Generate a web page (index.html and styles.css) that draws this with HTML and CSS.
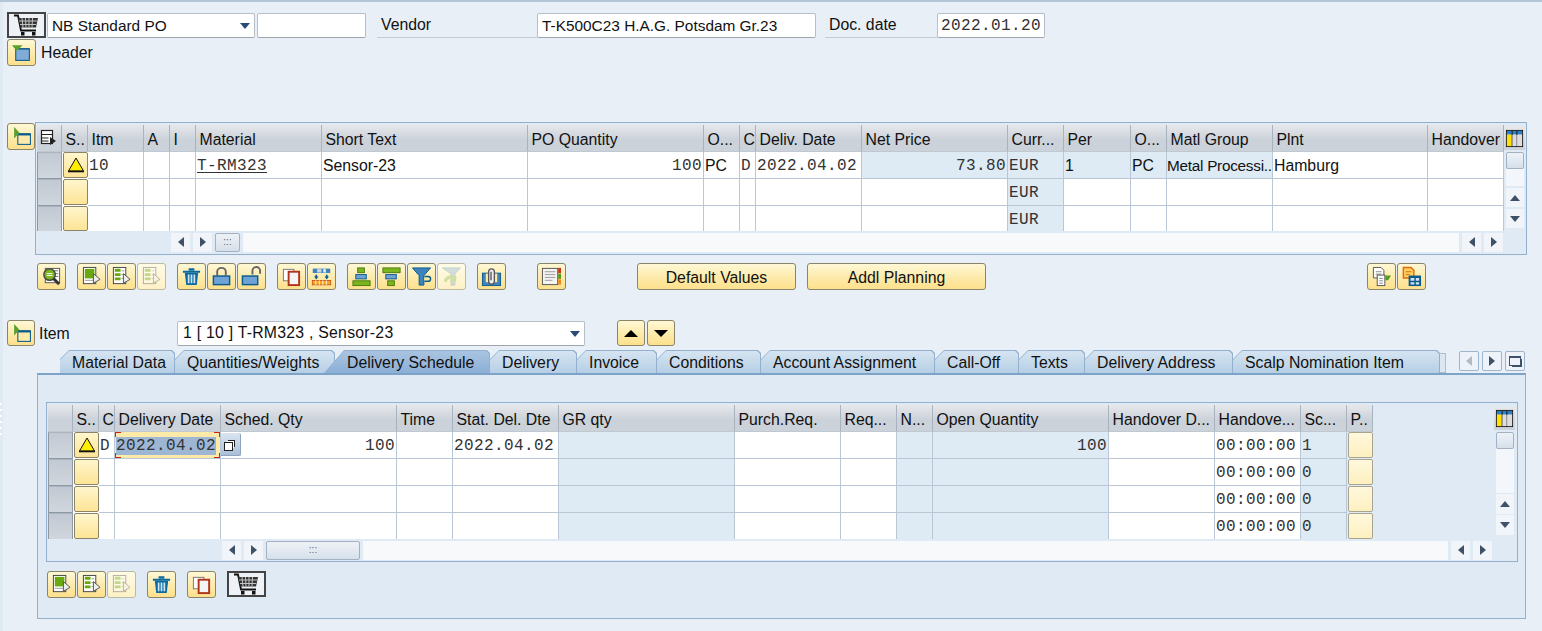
FILE: index.html
```html
<!DOCTYPE html>
<html>
<head>
    <meta charset="UTF-8">
    <title>Create Purchase Order</title>
    <link rel="stylesheet" href="styles.css">
</head>
<body>
<svg class="defs" width="0" height="0">
    <symbol id="cart" viewBox="0 0 30 22">
        <path d="M2 1.500h4l3 15h15" fill="none" stroke="#111" stroke-width="1.800"/>
        <path d="M6 4h20l-2 9.500H8.500z" fill="#333"/>
        <path d="M10 4l1 9.500M13.500 4l.5 9.500M17 4v9.500M20.500 4l-.5 9.500M7 7h18M8 10.500h16" stroke="#c4c4c4" stroke-width="1"/>
        <rect x="9" y="18" width="3.500" height="3.500" fill="#111"/><rect x="20" y="18" width="3.500" height="3.500" fill="#111"/>
    </symbol>
    <symbol id="sec-open" viewBox="0 0 20 20">
        <rect x="4.500" y="6.500" width="13" height="11" fill="#7fabd6" stroke="#0a5a8c"/>
        <path d="M4.500 6.500h13" stroke="#0a5a8c"/>
        <path d="M1 3h10L6 8H5z" fill="#5aa02c"/>
    </symbol>
    <symbol id="sec-closed" viewBox="0 0 20 20">
        <rect x="6.500" y="7.500" width="12" height="10" fill="#fdeaa8" stroke="#0a5a8c"/>
        <rect x="6.500" y="7" width="12" height="2" fill="#0a5a8c"/>
        <path d="M3 1v11l5-5.500z" fill="#5aa02c"/>
    </symbol>
    <symbol id="sel-cfg" viewBox="0 0 18 18">
        <rect x="1.500" y="1.500" width="11" height="13" fill="#fff" stroke="#222" stroke-width="1.200"/>
        <path d="M1.500 5.500h11M1.500 9h7M1.500 12h7" stroke="#222"/>
        <path d="M10 8v8l6-4z" fill="#222"/>
    </symbol>
    <symbol id="warn" viewBox="0 0 20 20">
        <path d="M10 3L2.500 16h15z" fill="#ffee00" stroke="#111" stroke-width="1"/>
        <path d="M2 16.500h16" stroke="#111" stroke-width="1.600"/>
    </symbol>
    <symbol id="config" viewBox="0 0 20 20">
        <rect x="1.500" y="1.500" width="17" height="17" fill="#fff" stroke="#111"/>
        <rect x="2" y="2" width="16" height="4" fill="#2f7fc4"/>
        <rect x="2" y="6" width="5" height="12" fill="#ffe000"/>
        <path d="M7.500 2v16M12.500 2v16" stroke="#111"/>
        <rect x="8" y="6" width="4" height="12" fill="#ddd"/><rect x="13" y="6" width="5" height="12" fill="#ddd"/>
    </symbol>
    <symbol id="details" viewBox="0 0 22 22">
        <rect x="4.500" y="2.500" width="15" height="15" fill="#fff" stroke="#555"/>
        <path d="M13 5h5M13 8h5M13 11h5" stroke="#777"/>
        <circle cx="9" cy="9" r="6" fill="#7ab51d" stroke="#444" stroke-width="1.500"/>
        <path d="M6 8h6M6 10h6" stroke="#fff"/>
        <path d="M13 13l6 6" stroke="#333" stroke-width="3"/>
    </symbol>
    <symbol id="sel-all" viewBox="0 0 22 22">
        <rect x="2.500" y="1.500" width="13" height="17" fill="#fff" stroke="#444"/>
        <rect x="4" y="3" width="10" height="10" fill="#6aa80f"/>
        <path d="M4 15h10" stroke="#999"/>
        <path d="M13 8v10l7-4z" fill="#eee" stroke="#555"/>
    </symbol>
    <symbol id="sel-block" viewBox="0 0 22 22">
        <rect x="2.500" y="1.500" width="13" height="17" fill="#fff" stroke="#444"/>
        <path d="M4 3h6v3H4zM4 7.500h6v3H4zM4 12h6v3H4z" fill="#6aa80f"/>
        <path d="M11 5h3M11 9h3M11 13h3" stroke="#999"/>
        <path d="M13 8v10l7-4z" fill="#eee" stroke="#555"/>
    </symbol>
    <symbol id="trash" viewBox="0 0 22 22">
        <path d="M8 3.500h6M2 6h18" stroke="#0a6aa0" stroke-width="2.200" fill="none"/>
        <path d="M4 7h14l-1.500 13h-11z" fill="#0a6aa0"/>
        <path d="M8 9v9M11 9v9M14 9v9" stroke="#cfe3f2" stroke-width="1.800"/>
    </symbol>
    <symbol id="lock" viewBox="0 0 22 22">
        <path d="M6.500 10V6a4.500 4 0 0 1 9 0v4" fill="none" stroke="#666" stroke-width="2"/>
        <rect x="2.500" y="10.500" width="17" height="9" fill="#6fa3d6" stroke="#0a5a8c" stroke-width="1.500"/>
    </symbol>
    <symbol id="unlock" viewBox="0 0 22 22">
        <path d="M12 9V5a4 4 0 0 1 8 0v3" fill="none" stroke="#666" stroke-width="2"/>
        <rect x="1.500" y="10.500" width="16" height="9" fill="#6fa3d6" stroke="#0a5a8c" stroke-width="1.500"/>
    </symbol>
    <symbol id="copy" viewBox="0 0 22 22">
        <rect x="2.500" y="3.500" width="11" height="12" fill="#fff" stroke="#777"/>
        <rect x="8" y="6" width="11" height="14" fill="#f4f4f4" stroke="#b0341c" stroke-width="2"/>
    </symbol>
    <symbol id="distrib" viewBox="0 0 24 22">
        <path d="M2 2h20v5H2z" fill="#3f83bd"/><path d="M7 2.500h5v4H7z" fill="#c9d6df"/><path d="M14 2.500h3v4h-3z" fill="#eee"/>
        <path d="M6 9v3M18 9v3" stroke="#0a5a8c" stroke-width="2"/><path d="M3.500 11h5L6 14.500zM15.500 11h5L18 14.500z" fill="#0a5a8c"/>
        <rect x="1.500" y="15.500" width="21" height="5" fill="#f6a81c" stroke="#c9541c"/>
        <path d="M5.500 15.500v5M9.500 15.500v5M13.500 15.500v5M17.500 15.500v5" stroke="#fff"/>
    </symbol>
    <symbol id="sort-up" viewBox="0 0 22 22">
        <rect x="7" y="2" width="7" height="5" fill="#7ab51d" stroke="#4c7c10"/>
        <rect x="5" y="9" width="11" height="4.500" fill="#6fa3d6" stroke="#0a5a8c"/>
        <rect x="2" y="15.500" width="18" height="5" fill="#7ab51d" stroke="#4c7c10"/>
    </symbol>
    <symbol id="sort-down" viewBox="0 0 22 22">
        <rect x="2" y="2" width="18" height="5" fill="#7ab51d" stroke="#4c7c10"/>
        <rect x="5" y="9" width="11" height="4.500" fill="#6fa3d6" stroke="#0a5a8c"/>
        <rect x="7" y="15.500" width="7" height="5" fill="#7ab51d" stroke="#4c7c10"/>
    </symbol>
    <symbol id="filter" viewBox="0 0 22 22">
        <path d="M1.500 2h19l-7 8v10h-5V10z" fill="#3f83bd" stroke="#0a5a8c"/>
        <path d="M14 11h4a2.500 2.500 0 0 1 0 5h-4" fill="#fdeaa8" stroke="#0a5a8c" stroke-width="1.500"/>
    </symbol>
    <symbol id="filter-off" viewBox="0 0 22 22">
        <path d="M1.500 2h19l-6 6v12h-4V8z" fill="#8fb8d6" stroke="#6f95ad"/>
        <path d="M3 16a7 7 0 0 1 11-5l2-1v6h-6l2-2a4 4 0 0 0-6 3z" fill="#8fbf5c"/>
    </symbol>
    <symbol id="clip" viewBox="0 0 22 22">
        <rect x="1.500" y="7.500" width="19" height="13" fill="#3f83bd" stroke="#0a5a8c"/>
        <rect x="5" y="8" width="12" height="9" fill="#fdeaa8"/>
        <path d="M8 6a3 3 0 0 1 6 0v10a3 3 0 0 1-6 0V6M10.500 6v9" fill="#eee" stroke="#555" stroke-width="1.400"/>
    </symbol>
    <symbol id="texts" viewBox="0 0 22 22">
        <rect x="1.500" y="2.500" width="16" height="17" fill="#f4f4f4" stroke="#555"/>
        <path d="M4 6h11M4 9h11M4 12h11M4 15h8" stroke="#999"/>
        <rect x="18" y="2" width="3" height="5.500" fill="#c9341c"/><rect x="18" y="8" width="3" height="5.500" fill="#5a9a1c"/><rect x="18" y="14" width="3" height="5.500" fill="#f08a1c"/>
    </symbol>
    <symbol id="doc-arrow" viewBox="0 0 22 22">
        <path d="M2.500 1.500h8l3 3v8h-11z" fill="#fff" stroke="#555"/>
        <path d="M5 6h6M5 8.500h6" stroke="#888"/>
        <rect x="6.500" y="9.500" width="8" height="11" fill="#fff" stroke="#555"/>
        <path d="M8.500 13h4M8.500 15.500h4M8.500 18h4" stroke="#888"/>
        <path d="M15 10h6l-3 5h-3z" fill="#5a9a1c"/>
    </symbol>
    <symbol id="doc-table" viewBox="0 0 22 22">
        <path d="M2.500 1.500h8l3 3v8h-11z" fill="#fdd05c" stroke="#e06a10" stroke-width="1.500"/>
        <path d="M5 6h6M5 9h4" stroke="#e06a10"/>
        <rect x="8" y="10" width="13" height="11" fill="#0a5a8c"/>
        <path d="M10 12.500h4v3h-4zM15.500 12.500h3.500v3h-3.500zM10 17h4v2.500h-4zM15.500 17h3.500v2.500h-3.500z" fill="#cfe3f2"/>
    </symbol>
</svg>

<div class="head-row">
    <button class="cart-btn"><svg class="cart-ico"><use href="#cart"/></svg></button>
    <div class="field combo doc-type">NB Standard PO<span class="drop"></span></div>
    <div class="field doc-no"></div>
    <div class="label vendor-label">Vendor</div>
    <div class="field vendor">T-K500C23 H.A.G. Potsdam Gr.23</div>
    <div class="label date-label">Doc. date</div>
    <div class="field mono doc-date">2022.01.20</div>
</div>

<div class="header-row">
    <button class="btn"><svg class="ico"><use href="#sec-open"/></svg></button>
    <span>Header</span>
</div>

<div class="items">
    <button class="btn sec-btn"><svg class="ico"><use href="#sec-closed"/></svg></button>
    <div class="frame items-frame">
        <div class="frame-main">
            <div class="table-wrap wrap-items">
                <table class="tc">
                    <colgroup>
                        <col class="w25"><col class="w26"><col class="w56"><col class="w26"><col class="w26"><col class="w126"><col class="w206"><col class="w176"><col class="w36"><col class="w16"><col class="w106"><col class="w146"><col class="w56"><col class="w67"><col class="w36"><col class="w106"><col class="w155"><col class="w76">
                    </colgroup>
                    <tr>
                        <th class="sel-head"><svg class="ico small"><use href="#sel-cfg"/></svg></th><th>S..</th><th>Itm</th><th>A</th><th>I</th><th>Material</th><th>Short Text</th><th>PO Quantity</th><th>O...</th><th>C</th><th>Deliv. Date</th><th>Net Price</th><th>Curr...</th><th>Per</th><th>O...</th><th>Matl Group</th><th>Plnt</th><th>Handover</th>
                    </tr>
                    <tr>
                        <td class="sel"></td><td class="st"><button class="cell-btn"><svg class="ico warn"><use href="#warn"/></svg></button></td><td class="mono">10</td><td></td><td></td><td class="mono"><u>T-RM323</u></td><td>Sensor-23</td><td class="mono num">100</td><td>PC</td><td class="mono">D</td><td class="mono">2022.04.02</td><td class="mono num ro">73.80</td><td class="mono ro">EUR</td><td class="ro">1</td><td class="ro">PC</td><td class="ro tight">Metal Processi..</td><td>Hamburg</td><td></td>
                    </tr>
                    <tr>
                        <td class="sel"></td><td class="st"><button class="cell-btn"></button></td><td></td><td></td><td></td><td></td><td></td><td></td><td></td><td></td><td></td><td></td><td class="mono ro">EUR</td><td></td><td></td><td></td><td></td><td></td>
                    </tr>
                    <tr>
                        <td class="sel"></td><td class="st"><button class="cell-btn"></button></td><td></td><td></td><td></td><td></td><td></td><td></td><td></td><td></td><td></td><td></td><td class="mono ro">EUR</td><td></td><td></td><td></td><td></td><td></td>
                    </tr>
                </table>
            </div>
            <div class="hscroll hs-items">
                <span class="sb-btn"><i class="arr left"></i></span>
                <span class="sb-btn"><i class="arr right"></i></span>
                <span class="thumb thumb-items">:::</span>
                <span class="track"></span>
                <span class="sb-btn"><i class="arr left"></i></span>
                <span class="sb-btn"><i class="arr right"></i></span>
            </div>
        </div>
        <div class="vscroll vs-items">
            <button class="cfg"><svg class="ico cfg-ico"><use href="#config"/></svg></button>
            <span class="vthumb"></span>
            <span class="vtrack"></span>
            <span class="sb-btn tall"><i class="arr up"></i></span>
            <span class="sb-btn tall"><i class="arr down"></i></span>
        </div>
    </div>
</div>

<div class="toolbar">
    <button class="btn"><svg class="ico"><use href="#details"/></svg></button>
    <button class="btn g10"><svg class="ico"><use href="#sel-all"/></svg></button>
    <button class="btn"><svg class="ico"><use href="#sel-block"/></svg></button>
    <button class="btn off"><svg class="ico"><use href="#sel-block"/></svg></button>
    <button class="btn g10"><svg class="ico"><use href="#trash"/></svg></button>
    <button class="btn"><svg class="ico"><use href="#lock"/></svg></button>
    <button class="btn"><svg class="ico"><use href="#unlock"/></svg></button>
    <button class="btn g10"><svg class="ico"><use href="#copy"/></svg></button>
    <button class="btn"><svg class="ico"><use href="#distrib"/></svg></button>
    <button class="btn g10"><svg class="ico"><use href="#sort-up"/></svg></button>
    <button class="btn"><svg class="ico"><use href="#sort-down"/></svg></button>
    <button class="btn"><svg class="ico"><use href="#filter"/></svg></button>
    <button class="btn off"><svg class="ico"><use href="#filter-off"/></svg></button>
    <button class="btn g10"><svg class="ico"><use href="#clip"/></svg></button>
    <button class="btn g30"><svg class="ico"><use href="#texts"/></svg></button>
    <button class="btn text-btn values-btn">Default Values</button>
    <button class="btn text-btn planning-btn">Addl Planning</button>
    <button class="btn push"><svg class="ico"><use href="#doc-arrow"/></svg></button>
    <button class="btn"><svg class="ico"><use href="#doc-table"/></svg></button>
</div>

<div class="item-row">
    <button class="btn"><svg class="ico"><use href="#sec-closed"/></svg></button>
    <span class="item-label">Item</span>
    <div class="field combo item-combo">1 [ 10 ] T-RM323 , Sensor-23<span class="drop"></span></div>
    <button class="btn up-btn"><i class="big-arr up"></i></button>
    <button class="btn"><i class="big-arr down"></i></button>
</div>

<div class="tab-row">
    <div class="tabs">
        <div class="tab">Material Data</div>
        <div class="tab">Quantities/Weights</div>
        <div class="tab active">Delivery Schedule</div>
        <div class="tab">Delivery</div>
        <div class="tab">Invoice</div>
        <div class="tab">Conditions</div>
        <div class="tab">Account Assignment</div>
        <div class="tab">Call-Off</div>
        <div class="tab">Texts</div>
        <div class="tab">Delivery Address</div>
        <div class="tab">Scalp Nomination Item</div>
    </div>
    <div class="tab-stack"></div>
    <div class="tab-nav">
        <span class="nav-btn faded"><i class="arr left"></i></span>
        <span class="nav-btn"><i class="arr right"></i></span>
        <span class="nav-btn"><span class="nav-list"></span></span>
    </div>
</div>

<div class="panel">
    <div class="frame sched-frame">
        <div class="frame-main">
            <div class="table-wrap wrap-sched">
                <table class="tc">
                    <colgroup>
                        <col class="w25"><col class="w26"><col class="w16"><col class="w106"><col class="w176"><col class="w56"><col class="w106"><col class="w176"><col class="w106"><col class="w56"><col class="w36"><col class="w176"><col class="w106"><col class="w86"><col class="w46"><col class="w26">
                    </colgroup>
                    <tr>
                        <th class="sel-head"></th><th>S..</th><th>C</th><th>Delivery Date</th><th>Sched. Qty</th><th>Time</th><th>Stat. Del. Dte</th><th>GR qty</th><th>Purch.Req.</th><th>Req...</th><th>N...</th><th>Open Quantity</th><th>Handover D...</th><th>Handove...</th><th>Sc...</th><th>P..</th>
                    </tr>
                    <tr>
                        <td class="sel"></td><td class="st"><button class="cell-btn"><svg class="ico warn"><use href="#warn"/></svg></button></td><td class="mono">D</td><td class="focus mono"><span class="picked">2022.04.02</span></td><td class="mono num qty-cell"><button class="pop-btn"><span class="pop-glyph"></span></button>100</td><td></td><td class="mono">2022.04.02</td><td class="ro"></td><td></td><td></td><td class="ro"></td><td class="mono num ro">100</td><td></td><td class="mono">00:00:00</td><td class="mono ro">1</td><td class="st ro"><button class="cell-btn pale"></button></td>
                    </tr>
                    <tr>
                        <td class="sel"></td><td class="st"><button class="cell-btn"></button></td><td></td><td></td><td></td><td></td><td></td><td class="ro"></td><td></td><td></td><td class="ro"></td><td class="ro"></td><td></td><td class="mono">00:00:00</td><td class="mono ro">0</td><td class="st ro"><button class="cell-btn pale"></button></td>
                    </tr>
                    <tr>
                        <td class="sel"></td><td class="st"><button class="cell-btn"></button></td><td></td><td></td><td></td><td></td><td></td><td class="ro"></td><td></td><td></td><td class="ro"></td><td class="ro"></td><td></td><td class="mono">00:00:00</td><td class="mono ro">0</td><td class="st ro"><button class="cell-btn pale"></button></td>
                    </tr>
                    <tr>
                        <td class="sel"></td><td class="st"><button class="cell-btn"></button></td><td></td><td></td><td></td><td></td><td></td><td class="ro"></td><td></td><td></td><td class="ro"></td><td class="ro"></td><td></td><td class="mono">00:00:00</td><td class="mono ro">0</td><td class="st ro"><button class="cell-btn pale"></button></td>
                    </tr>
                </table>
            </div>
            <div class="hscroll hs-sched">
                <span class="sb-btn"><i class="arr left"></i></span>
                <span class="sb-btn"><i class="arr right"></i></span>
                <span class="thumb thumb-sched">:::</span>
                <span class="track"></span>
                <span class="sb-btn"><i class="arr left"></i></span>
                <span class="sb-btn"><i class="arr right"></i></span>
            </div>
        </div>
        <div class="vscroll vs-sched">
            <button class="cfg"><svg class="ico cfg-ico"><use href="#config"/></svg></button>
            <span class="vthumb"></span>
            <span class="vtrack"></span>
            <span class="sb-btn tall"><i class="arr up"></i></span>
            <span class="sb-btn tall"><i class="arr down"></i></span>
        </div>
    </div>
    <div class="toolbar panel-bar">
        <button class="btn"><svg class="ico"><use href="#sel-all"/></svg></button>
        <button class="btn"><svg class="ico"><use href="#sel-block"/></svg></button>
        <button class="btn off"><svg class="ico"><use href="#sel-block"/></svg></button>
        <button class="btn g10"><svg class="ico"><use href="#trash"/></svg></button>
        <button class="btn g10"><svg class="ico"><use href="#copy"/></svg></button>
        <button class="cart-btn g10"><svg class="cart-ico"><use href="#cart"/></svg></button>
    </div>
</div>
</body>
</html>
```

FILE: styles.css
```css
* {
    box-sizing: border-box;
}

html {
    overflow: hidden;
}

body {
    margin: 0;
    height: 631px;
    padding-left: 7px;
    border-top: 2px solid #b3c6d6;
    font-family: "Liberation Sans", Arial, sans-serif;
    font-size: 15.8px;
    color: #111;
    background:
        repeating-linear-gradient(#fff 0 2px, transparent 2px 6px) 0 403px / 2px 36px no-repeat,
        linear-gradient(#dfeaf3, #dfeaf3) 0 0 / 3px 100% no-repeat,
        #e8eff7;
}

.defs {
    position: absolute;
}

button {
    padding: 0;
    font: inherit;
    color: inherit;
}

.mono {
    font-family: "Liberation Mono", monospace;
    font-size: 16px;
    letter-spacing: 0.4px;
    color: #333;
}

/* top rows */
.head-row {
    display: flex;
    align-items: center;
    height: 26px;
    margin-top: 10px;
}

.cart-btn {
    display: flex;
    align-items: center;
    justify-content: center;
    width: 39px;
    height: 26px;
    border: 2px solid #444;
    background: #eef1f5;
}

.cart-ico {
    width: 30px;
    height: 22px;
}

.field {
    display: flex;
    align-items: center;
    height: 25px;
    padding: 1px 0 0 4px;
    font-size: 15.4px;
    background: #fff;
    border: 1px solid #b8bec5;
    border-bottom-color: #9ea5ad;
    border-radius: 2px;
}

.field.mono {
    font-size: 16px;
}

.combo {
    position: relative;
}

.drop {
    position: absolute;
    right: 4px;
    top: 9px;
    width: 0;
    height: 0;
    border: 5px solid transparent;
    border-top: 6px solid #2b4a78;
    border-bottom: 0;
}

.doc-type {
    width: 208px;
    margin-left: 1px;
}

.doc-no {
    width: 109px;
    margin-left: 2px;
}

.label {
    height: 26px;
    line-height: 26px;
    padding-left: 4px;
    border-bottom: 1px solid #c3ccd6;
}

.vendor-label {
    width: 160px;
    margin-left: 11px;
}

.vendor {
    width: 279px;
}

.date-label {
    width: 112px;
    margin-left: 9px;
}

.doc-date {
    width: 108px;
    padding-left: 3px;
}

.header-row {
    display: flex;
    align-items: flex-start;
    gap: 5px;
    height: 27px;
    margin-top: 1px;
    line-height: 28px;
}

/* buttons */
.btn {
    display: flex;
    align-items: center;
    justify-content: center;
    flex: none;
    width: 29px;
    height: 27px;
    line-height: normal;
    background: linear-gradient(#fff8d6, #fde9a6 60%, #fde08c);
    border: 1px solid #8a8468;
    border-radius: 3px;
}

.ico {
    width: 21px;
    height: 21px;
}

.off {
    border-color: #bdb9a5;
    background: linear-gradient(#fffbe6, #fdf1c6);
}

.off .ico {
    opacity: 0.4;
}

.sec-btn {
    width: 28px;
    margin-top: 1px;
}

/* grids */
.items {
    display: flex;
    align-items: flex-start;
    margin-top: 56px;
}

.frame {
    display: flex;
    border: 1px solid #93b0cd;
    background: #dfeaf4;
}

.items-frame {
    width: 1492px;
    height: 133px;
    padding: 2px 0 0 1px;
}

.sched-frame {
    width: 1472px;
    height: 160px;
    padding: 2px 0 0 1px;
}

.frame-main {
    display: flex;
    flex-direction: column;
}

.wrap-items {
    width: 1467px;
    height: 106px;
    overflow: hidden;
}

.wrap-sched {
    width: 1325px;
    height: 134px;
    overflow: hidden;
}

.tc {
    table-layout: fixed;
    border-collapse: separate;
    border-spacing: 0;
    width: 100%;
}

.tc th,
.tc td {
    height: 27px;
    padding: 2px 0 0 1px;
    overflow: hidden;
    white-space: nowrap;
    text-align: left;
    font-weight: normal;
    border-right: 1px solid #b9c6d5;
    border-bottom: 1px solid #b9c6d5;
    background: #fff;
}

.tc th {
    padding: 3px 0 0 3.5px;
    background: linear-gradient(#e6e8eb, #ccd2da 55%, #ccd2da);
    border-right-color: #a9b3bf;
    border-bottom-color: #c0c8d2;
}

.tc td.ro {
    background: #deeaf4;
}

.tc .num {
    padding: 2px 1px 0 0;
    text-align: right;
}

.tc .tight {
    padding-left: 0;
    font-size: 15.3px;
    letter-spacing: -0.25px;
}

.tc u {
    text-underline-offset: 2px;
}

.tc .sel {
    padding: 0;
    background: linear-gradient(#c2c9d2, #d0d6dd);
    border: 1px solid #8e99a6;
    border-top-color: #aab3be;
}

.tc .sel-head {
    padding: 0 0 0 3px;
}

.tc .st {
    padding: 0 0 0 1px;
    border: 0;
    vertical-align: top;
}

.w16 { width: 16px; }
.w25 { width: 25px; }
.w26 { width: 26px; }
.w36 { width: 36px; }
.w46 { width: 46px; }
.w56 { width: 56px; }
.w67 { width: 67px; }
.w76 { width: 76px; }
.w86 { width: 86px; }
.w106 { width: 106px; }
.w126 { width: 126px; }
.w146 { width: 146px; }
.w155 { width: 155px; }
.w176 { width: 176px; }
.w206 { width: 206px; }

.small {
    display: block;
    width: 18px;
    height: 18px;
}

.cell-btn {
    display: flex;
    align-items: center;
    justify-content: center;
    width: 25px;
    height: 26px;
    background: linear-gradient(#fff6cd, #fde496);
    border: 1px solid #8a8468;
    border-radius: 2px;
}

.wrap-items tr:last-child .cell-btn {
    height: 25px;
}

.cell-btn.pale {
    background: linear-gradient(#fff8dc, #fdf0c0);
    border-color: #a9a490;
}

.warn {
    width: 20px;
    height: 20px;
}

/* focused date cell */
.tc .focus {
    position: relative;
    padding: 2px 0 0 1px;
    background:
        linear-gradient(#d2201c, #d2201c) 0 0 / 6px 1px no-repeat,
        linear-gradient(#d2201c, #d2201c) 0 0 / 1px 5px no-repeat,
        linear-gradient(#d2201c, #d2201c) 100% 0 / 6px 1px no-repeat,
        linear-gradient(#d2201c, #d2201c) 100% 0 / 1px 5px no-repeat,
        linear-gradient(#d2201c, #d2201c) 0 100% / 6px 1px no-repeat,
        linear-gradient(#d2201c, #d2201c) 0 100% / 1px 5px no-repeat,
        linear-gradient(#d2201c, #d2201c) 100% 100% / 6px 1px no-repeat,
        linear-gradient(#d2201c, #d2201c) 100% 100% / 1px 5px no-repeat,
        #fde9a8;
}

.picked {
    background: #9db6d3;
}

.qty-cell {
    position: relative;
}

.pop-btn {
    position: absolute;
    left: 0;
    top: 1px;
    width: 20px;
    height: 23px;
    background: linear-gradient(#dbe5f0, #a9bfd9);
    border: 0;
    border-right: 1px solid #8fa5bf;
    border-bottom: 1px solid #8fa5bf;
    border-radius: 0 2px 2px 0;
}

.pop-glyph {
    display: block;
    width: 9px;
    height: 9px;
    margin: 4px 0 0 3px;
    background: #fff;
    border: 1px solid #222;
    box-shadow: 2px -2px 0 -1px #fff, 3px -3px 0 -1px #222;
}

/* scrollbars */
.hscroll {
    display: flex;
    align-items: center;
    gap: 3px;
    height: 20px;
    margin-top: 1px;
}

.hs-items {
    width: 1466px;
    padding-left: 134px;
}

.hs-sched {
    width: 1444px;
    padding-left: 174px;
}

.sb-btn {
    display: flex;
    align-items: center;
    justify-content: center;
    flex: none;
    width: 19px;
    height: 19px;
    background: #f1f4f8;
}

.sb-btn.tall {
    width: 18px;
    height: 19px;
}

.arr {
    width: 0;
    height: 0;
    border: 5px solid transparent;
}

.arr.left {
    border-left: 0;
    border-right: 6px solid #3f5168;
}

.arr.right {
    border-right: 0;
    border-left: 6px solid #3f5168;
}

.arr.up {
    border-top: 0;
    border-bottom: 6px solid #3f5168;
}

.arr.down {
    border-bottom: 0;
    border-top: 6px solid #3f5168;
}

.thumb {
    flex: none;
    height: 19px;
    line-height: 15px;
    text-align: center;
    font-size: 10px;
    color: #667;
    background: linear-gradient(#eef2f6, #d6e0ea);
    border: 1px solid #a3b2c2;
    border-radius: 2px;
}

.thumb-items {
    width: 25px;
}

.thumb-sched {
    width: 94px;
}

.track {
    flex: 1;
    height: 19px;
    background: #f8f9fb;
}

.vscroll {
    display: flex;
    flex-direction: column;
    align-items: center;
    flex: none;
    width: 22px;
}

.vs-sched {
    margin-left: 2px;
}

.cfg {
    display: flex;
    align-items: center;
    justify-content: center;
    width: 21px;
    height: 24px;
    margin: 1px 2px 0 0;
    border: 0;
    background: linear-gradient(#e6e8eb, #ccd2da);
}

.vs-sched .cfg {
    height: 23px;
    margin-top: 2px;
}

.cfg-ico {
    width: 19px;
    height: 19px;
}

.vthumb {
    width: 18px;
    height: 17px;
    margin-top: 2px;
    background: linear-gradient(#eef2f6, #d6e0ea);
    border: 1px solid #a3b2c2;
    border-radius: 2px;
}

.vtrack {
    width: 18px;
    height: 17px;
    background: #f3f6fa;
}

.vs-items .sb-btn.tall {
    margin-top: 2px;
}

.vs-sched .vtrack {
    height: 44px;
}

.vs-sched .sb-btn.tall {
    height: 20px;
    margin-top: 1px;
}

/* toolbars */
.toolbar {
    display: flex;
    gap: 1px;
    width: 1389px;
    height: 27px;
    margin: 8px 0 0 30px;
}

.g10 {
    margin-left: 10px;
}

.g30 {
    margin-left: 30px;
}

.text-btn {
    padding-top: 2px;
}

.values-btn {
    width: 159px;
    margin-left: 70px;
}

.planning-btn {
    width: 179px;
    margin-left: 10px;
}

.push {
    margin-left: auto;
}

.item-row {
    display: flex;
    align-items: center;
    height: 26px;
    margin-top: 30px;
}

.item-row .btn {
    width: 28px;
    height: 26px;
}

.item-label {
    width: 142px;
    padding: 2px 0 0 4px;
}

.item-combo {
    width: 408px;
    padding: 0 0 0 5px;
    font-size: 15.8px;
    letter-spacing: 0.25px;
}

.item-row .up-btn {
    margin: 0 2px 0 32px;
}

.big-arr {
    width: 0;
    height: 0;
    border: 7px solid transparent;
}

.big-arr.up {
    border-top: 0;
    border-bottom: 7px solid #000;
}

.big-arr.down {
    border-bottom: 0;
    border-top: 7px solid #000;
}

/* tab strip */
.tab-row {
    display: flex;
    align-items: flex-end;
    height: 23px;
    margin: 4px 0 0 53px;
}

.tabs {
    display: grid;
    grid-template-columns: 115px 160px 155px 87px 80px 104px 174px 84px 66px 148px 207px;
}

.tab {
    position: relative;
    height: 23px;
    margin-left: -11px;
    padding-left: 23px;
    line-height: 26px;
    white-space: nowrap;
    background: #93b1cf;
    clip-path: polygon(20px 0, calc(100% - 3px) 0, 100% 3px, 100% 100%, 11px 100%, 11px 9px);
}

.tab::before {
    content: "";
    position: absolute;
    inset: 1px 1px 0 1px;
    z-index: -1;
    background: linear-gradient(#d5e4f1, #b6cfe5);
    clip-path: polygon(19px 0, calc(100% - 3px) 0, 100% 3px, 100% 100%, 10px 100%, 10px 9px);
}

.tab.active {
    clip-path: polygon(20px 0, calc(100% - 3px) 0, 100% 3px, 100% 100%, 0 100%);
}

.tab.active::before {
    background: linear-gradient(#a9c4e1, #8cafd6);
    clip-path: polygon(19px 0, calc(100% - 3px) 0, 100% 3px, 100% 100%, 0 100%);
}

.tab-stack {
    width: 6px;
    height: 20px;
    background: #dbe7f2;
    border: 1px solid #a9c0d6;
    border-left: 0;
}

.tab-nav {
    display: flex;
    gap: 3px;
    margin: 0 0 2px 13px;
}

.nav-btn {
    display: flex;
    align-items: center;
    justify-content: center;
    width: 20px;
    height: 20px;
    background: #eef3f9;
    border: 1px solid #9db5cd;
    border-radius: 2px;
}

.nav-btn.faded .arr {
    opacity: 0.35;
}

.nav-list {
    width: 12px;
    height: 10px;
    border: 1px solid #3f5168;
    border-top-width: 2px;
    box-shadow: 2px 2px 0 -1px #3f5168;
}

/* lower panel */
.panel {
    width: 1489px;
    height: 246px;
    margin-left: 30px;
    padding: 27px 0 0 8px;
    background: #dfeaf4;
    border: 1px solid #93b0cd;
    border-top: 2px solid #7ea3c9;
}

.panel-bar {
    width: auto;
    margin: 9px 0 0 1px;
}
```
